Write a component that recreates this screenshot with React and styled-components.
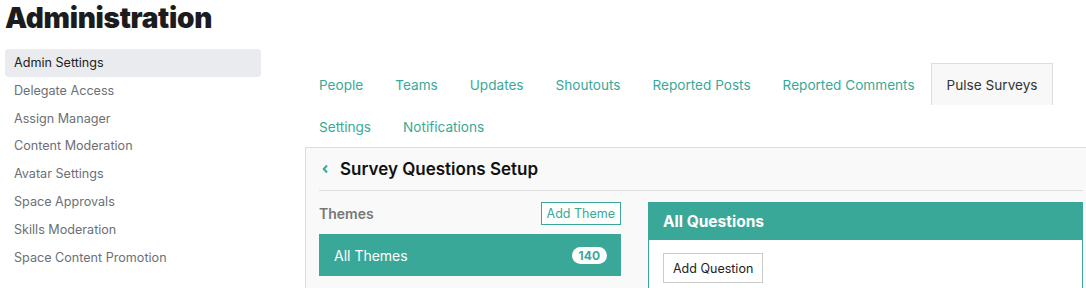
import styled, { createGlobalStyle } from "styled-components";

const teal = "#3aa899";

const sideItems = [
  "Admin Settings",
  "Delegate Access",
  "Assign Manager",
  "Content Moderation",
  "Avatar Settings",
  "Space Approvals",
  "Skills Moderation",
  "Space Content Promotion",
];

const tabRows = [
  ["People", "Teams", "Updates", "Shoutouts", "Reported Posts", "Reported Comments", "Pulse Surveys"],
  ["Settings", "Notifications"],
];

function App() {
  return (
    <>
      <GlobalStyle />
      <Page>
        <Title>Administration</Title>
        <Layout>
          <Sidebar>
            {sideItems.map((item, i) => (
              <SideItem key={item} $active={i === 0}>
                {item}
              </SideItem>
            ))}
          </Sidebar>
          <Main>
            {tabRows.map((row, r) => (
              <TabRow key={r}>
                {row.map((tab) => (
                  <Tab key={tab} $active={tab === "Pulse Surveys"}>
                    {tab}
                  </Tab>
                ))}
              </TabRow>
            ))}
            <Panel>
              <PanelHeader>
                <svg width="7" height="10" viewBox="0 0 7 10">
                  <path
                    d="M5 1.5 L1.8 5 L5 8.5"
                    fill="none"
                    stroke={teal}
                    strokeWidth="2"
                  />
                </svg>
                <PanelTitle>Survey Questions Setup</PanelTitle>
              </PanelHeader>
              <PanelBody>
                <ThemesCol>
                  <ThemesHead>
                    <ThemesLabel>Themes</ThemesLabel>
                    <OutlineButton>Add Theme</OutlineButton>
                  </ThemesHead>
                  <ThemeItem>
                    All Themes
                    <Badge>140</Badge>
                  </ThemeItem>
                </ThemesCol>
                <Questions>
                  <QuestionsHeader>All Questions</QuestionsHeader>
                  <QuestionsBody>
                    <PlainButton>Add Question</PlainButton>
                  </QuestionsBody>
                </Questions>
              </PanelBody>
            </Panel>
          </Main>
        </Layout>
      </Page>
    </>
  );
}

const GlobalStyle = createGlobalStyle`
  body {
    margin: 0;
    overflow: hidden;
    background: #fff;
    font-family: Inter, "Noto Sans", sans-serif;
  }
`;

const Page = styled.div`
  padding: 0 0 0 5px;
  width: 1100px;
`;

const Title = styled.h1`
  margin: 0;
  padding-top: 1px;
  font-size: 28px;
  line-height: 34px;
  font-weight: 900;
  color: #1c1c1e;
  letter-spacing: -0.3px;
`;

const Layout = styled.div`
  display: flex;
  gap: 44px;
  margin-top: 14px;
`;

const Sidebar = styled.nav`
  width: 256px;
  display: flex;
  flex-direction: column;
  flex-shrink: 0;
`;

const SideItem = styled.div`
  height: 27.8px;
  line-height: 27.8px;
  padding-left: 9px;
  font-size: 12.6px;
  border-radius: 4px;
  color: ${(p) => (p.$active ? "#222" : "#6c7076")};
  background: ${(p) => (p.$active ? "#e9ebee" : "transparent")};
`;

const Main = styled.div`
  width: 792px;
  flex-shrink: 0;
  padding-top: 14px;
`;

const TabRow = styled.div`
  display: flex;
  margin-left: -2px;
`;

const Tab = styled.div`
  height: 42px;
  line-height: 42px;
  padding: 0 15px;
  font-size: 13.6px;
  color: ${(p) => (p.$active ? "#333" : teal)};
  background: ${(p) => (p.$active ? "#f8f8f8" : "transparent")};
  border: 1px solid ${(p) => (p.$active ? "#ddd" : "transparent")};
  border-bottom: none;
  box-sizing: border-box;
`;

const Panel = styled.section`
  border: 1px solid #ddd;
  background: #f9f9f9;
  padding: 0 13px;
  height: 160px;
`;

const PanelHeader = styled.div`
  height: 42px;
  display: flex;
  align-items: center;
  gap: 11px;
  padding-left: 3px;
  border-bottom: 1px solid #ddd;
`;

const PanelTitle = styled.h2`
  margin: 0;
  font-size: 17px;
  font-weight: 600;
  color: #111;
`;

const PanelBody = styled.div`
  display: flex;
  gap: 27px;
  padding-top: 11px;
`;

const ThemesCol = styled.div`
  width: 302px;
  flex-shrink: 0;
`;

const ThemesHead = styled.div`
  display: flex;
  justify-content: space-between;
  align-items: center;
  height: 23px;
`;

const ThemesLabel = styled.span`
  font-size: 14px;
  font-weight: 600;
  color: #777;
`;

const OutlineButton = styled.button`
  height: 23px;
  padding: 0 5px;
  border: 1px solid ${teal};
  background: #fff;
  color: ${teal};
  font-family: inherit;
  font-size: 12.5px;
`;

const ThemeItem = styled.div`
  margin-top: 9px;
  height: 42px;
  background: ${teal};
  color: #fff;
  font-size: 14px;
  display: flex;
  align-items: center;
  justify-content: space-between;
  padding: 0 14px 0 15px;
`;

const Badge = styled.span`
  background: #fff;
  color: ${teal};
  font-size: 12px;
  font-weight: 700;
  border-radius: 9px;
  height: 17px;
  line-height: 17px;
  padding: 0 7px;
`;

const Questions = styled.div`
  flex: 1;
  border: 1px solid ${teal};
  background: #fff;
  height: 100px;
`;

const QuestionsHeader = styled.div`
  height: 37px;
  line-height: 37px;
  background: ${teal};
  color: #fff;
  font-size: 15.5px;
  font-weight: 700;
  padding-left: 14px;
`;

const QuestionsBody = styled.div`
  padding: 13px 14px;
`;

const PlainButton = styled.button`
  height: 30px;
  padding: 0 9px;
  border: 1px solid #ccc;
  background: #fff;
  color: #222;
  font-family: inherit;
  font-size: 12.5px;
`;

export default App;
